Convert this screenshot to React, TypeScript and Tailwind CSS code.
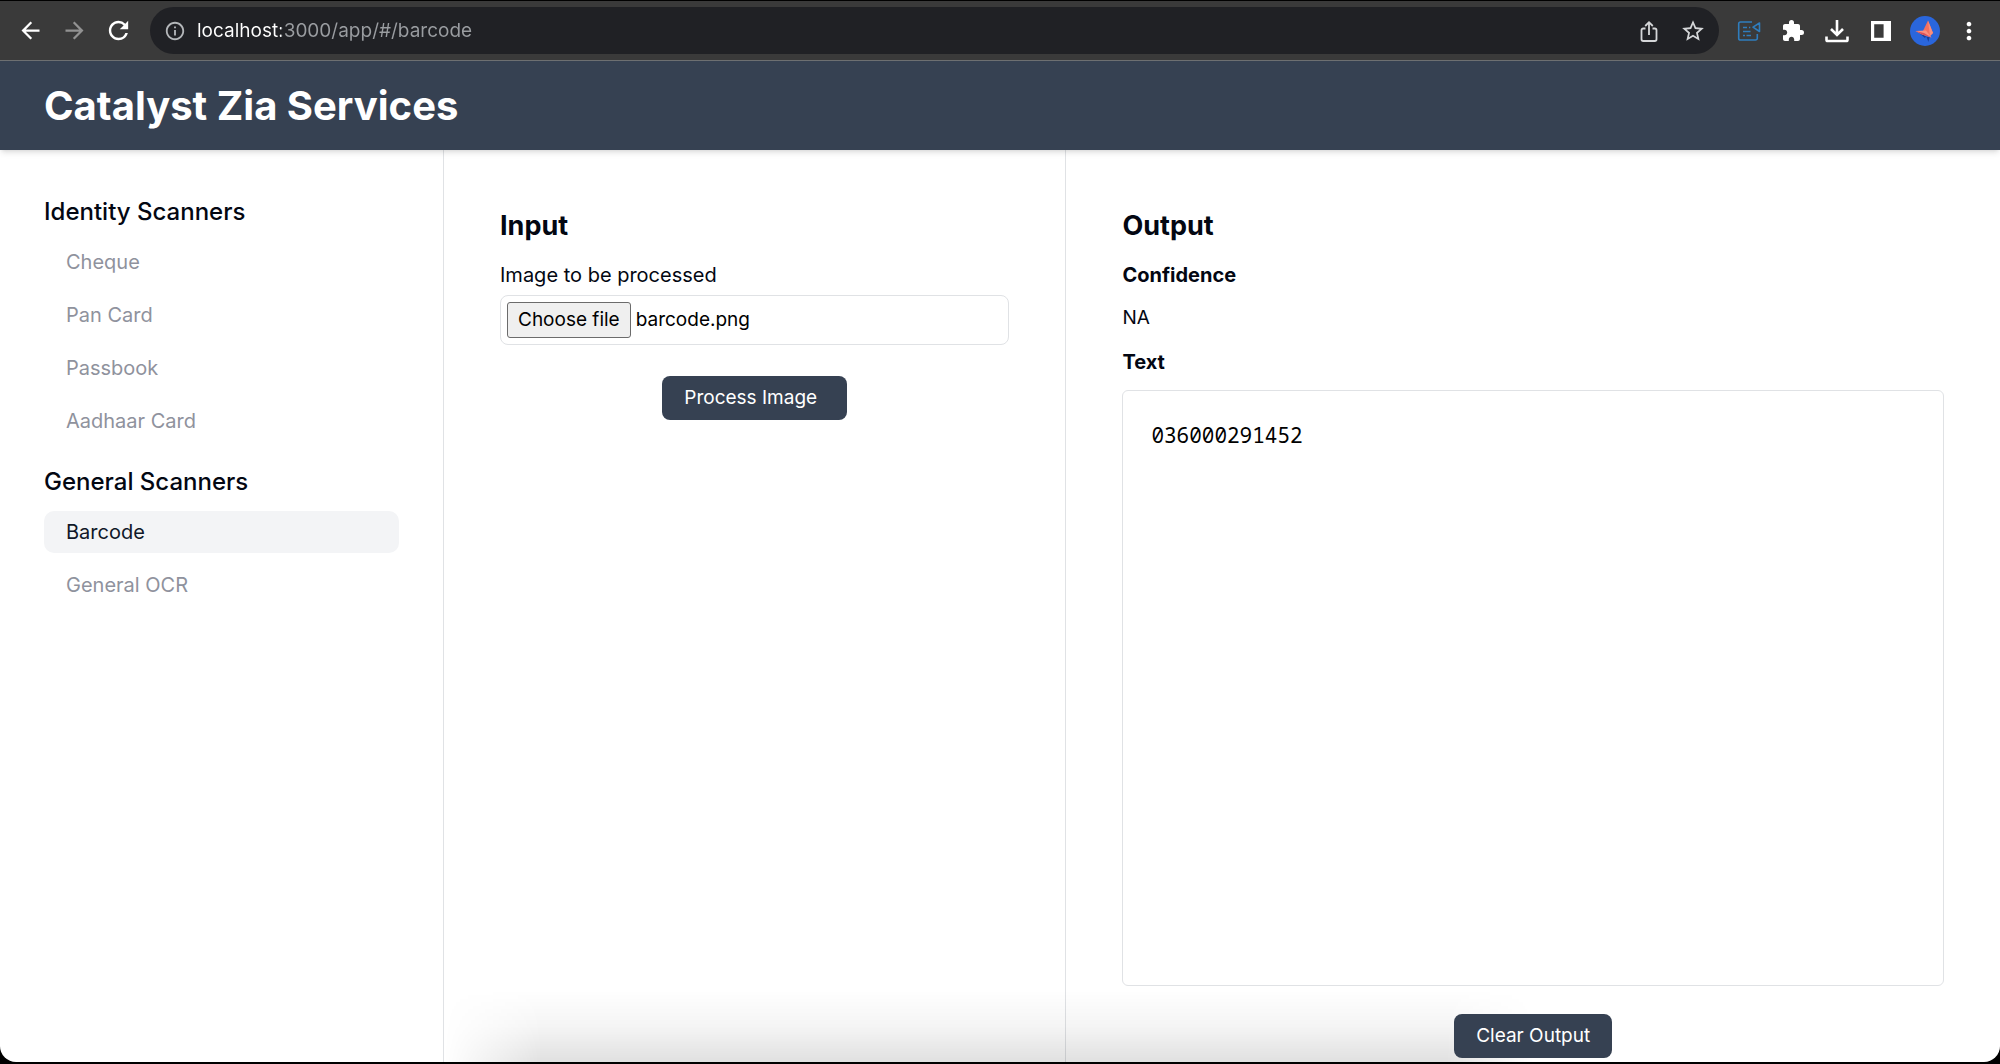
import { useRef, useState } from "react";
import type { ReactNode } from "react";
import { MdArrowBack, MdArrowForward, MdExtension, MdInfoOutline, MdMoreVert, MdRefresh, MdStarBorder } from "react-icons/md";

const groups = [
  {
    title: "Identity Scanners",
    items: ["Cheque", "Pan Card", "Passbook", "Aadhaar Card"],
  },
  { title: "General Scanners", items: ["Barcode", "General OCR"] },
];

function IconButton({ label, className = "", children }: { label: string; className?: string; children: ReactNode }) {
  return (
    <button type="button" aria-label={label} className={`flex size-8 items-center justify-center ${className}`}>
      {children}
    </button>
  );
}

function ShareIcon() {
  return (
    <svg viewBox="0 0 24 24" className="size-6" fill="none" stroke="currentColor" strokeWidth="1.8">
      <path d="M8.5 9.5H6.2A1.7 1.7 0 0 0 4.500 11.200V20.300A1.700 1.700 0 0 0 6.200 22H17.800A1.700 1.700 0 0 0 19.500 20.300V11.200A1.700 1.700 0 0 0 17.800 9.500H15.500" />
      <path d="M12 16V3.500M8.200 7 12 3.200 15.800 7" />
    </svg>
  );
}

function ReaderIcon() {
  return (
    <svg viewBox="0 0 24 22" className="h-[22px] w-6" fill="none" stroke="currentColor" strokeWidth="1.6">
      <path d="M15 2H3.500A1.800 1.800 0 0 0 1.700 3.800V18.200A1.800 1.800 0 0 0 3.500 20H18.500A1.800 1.800 0 0 0 20.300 18.200V14" />
      <path d="M22.500 3V11.500L16 7.200Z" strokeLinejoin="round" />
      <path d="M6 7.500H10M12 7.500H13.300M6 11.500H13.500M6 15.500H8M9.500 15.500H14" />
    </svg>
  );
}

function DownloadIcon() {
  return (
    <svg viewBox="0 0 24 24" className="size-6" fill="none" stroke="currentColor" strokeWidth="2.6">
      <path d="M12 1V15.500M6 10 12 16 18 10" />
      <path d="M1.500 17.500V20.700A1.300 1.300 0 0 0 2.800 22H21.200A1.300 1.300 0 0 0 22.500 20.700V17.500" />
    </svg>
  );
}

function SidePanelIcon() {
  return (
    <svg viewBox="0 0 20 20" className="size-5" fill="currentColor">
      <path fillRule="evenodd" d="M0 0H20V20H0ZM3.200 3.200V16.800H12.600V3.200Z" />
    </svg>
  );
}

function Avatar() {
  return (
    <svg viewBox="0 0 30 30" className="size-[30px]">
      <circle cx="15" cy="15" r="15" fill="#2a66dc" />
      <path d="M9 17 15 22 16 20Z" fill="#1b3f96" />
      <path d="M16.500 21 18.500 26 19.500 21Z" fill="#1b3f96" />
      <path d="M18 4.500 12.500 16 20 20 23 17Z" fill="#f4715f" />
      <path d="M18 4.500 20 20 23 17Z" fill="#fb8f7c" />
      <path d="M5.500 15 16 14.500 21.500 21.500 12 18.500Z" fill="#fa9080" />
      <path d="M5.500 15 12 18.500 21.500 21.500 14 17Z" fill="#d9525a" />
    </svg>
  );
}

function BrowserBar() {
  return (
    <div className="flex h-[61px] items-center border-t border-b border-t-black border-b-[#6d6f71] bg-[#3a3a3a] pr-[15px] pl-[14px] text-white">
      <div className="flex items-center gap-3">
        <IconButton label="Back"><MdArrowBack className="size-[27px]" /></IconButton>
        <IconButton label="Forward" className="text-[#929292]"><MdArrowForward className="size-[27px]" /></IconButton>
        <IconButton label="Reload"><MdRefresh className="size-[29px]" /></IconButton>
      </div>
      <div className="ml-4 flex h-[47px] flex-1 items-center rounded-full bg-[#202125] pr-[10px] pl-[14px]">
        <MdInfoOutline className="size-[22px] text-[#b4b7ba]" />
        <input
          type="text"
          aria-label="Address"
          defaultValue="localhost:3000/app/#/barcode"
          className="ml-[11px] flex-1 bg-[linear-gradient(90deg,#ffffff_84px,#9a9da1_84px)] bg-clip-text text-[19px] leading-7 text-transparent outline-none"
        />
        <div className="flex items-center gap-3 text-[#d5d7d9]">
          <IconButton label="Share"><ShareIcon /></IconButton>
          <IconButton label="Bookmark"><MdStarBorder className="size-[26px]" /></IconButton>
        </div>
      </div>
      <div className="ml-[14px] flex items-center gap-3">
        <IconButton label="Reader" className="text-[#2f7dbd]"><ReaderIcon /></IconButton>
        <IconButton label="Extensions"><MdExtension className="size-6" /></IconButton>
        <IconButton label="Downloads"><DownloadIcon /></IconButton>
        <IconButton label="Side panel"><SidePanelIcon /></IconButton>
        <IconButton label="Profile"><Avatar /></IconButton>
        <IconButton label="Menu"><MdMoreVert className="size-7" /></IconButton>
      </div>
    </div>
  );
}

function Sidebar({ active, onSelect }: { active: string; onSelect: (item: string) => void }) {
  return (
    <nav className="border-r border-[#e0e2e5] px-11 pt-[46px]">
      {groups.map((group) => (
        <section key={group.title} className="mb-6">
          <h2 className="mb-[13px] text-2xl leading-8 font-medium">{group.title}</h2>
          <ul className="flex flex-col gap-[11px]">
            {group.items.map((item) => (
              <li key={item}>
                <a
                  href="#"
                  aria-current={item === active ? "page" : undefined}
                  onClick={(e) => {
                    e.preventDefault();
                    onSelect(item);
                  }}
                  className={
                    item === active
                      ? "block rounded-[10px] bg-gray-100 px-[22px] py-[7px] text-xl text-gray-900"
                      : "block rounded-[10px] px-[22px] py-[7px] text-xl text-[#8f929d]"
                  }
                >
                  {item}
                </a>
              </li>
            ))}
          </ul>
        </section>
      ))}
    </nav>
  );
}

function InputPanel() {
  const fileInput = useRef<HTMLInputElement>(null);
  const [fileName, setFileName] = useState("barcode.png");
  return (
    <section className="flex flex-col border-r border-[#e0e2e5] px-14 pt-14">
      <h2 className="text-[27px] leading-10 font-bold">Input</h2>
      <label htmlFor="image" className="mt-[13px] text-xl leading-8">Image to be processed</label>
      <div className="mt-1 flex items-center rounded-lg border border-[#e0e2e5] p-[6px] text-[19px] leading-7">
        <button type="button" onClick={() => fileInput.current?.click()} className="rounded-[3px] border border-[#6b6b6b] bg-[#efefef] px-[10px] py-[3px] text-black">
          Choose file
        </button>
        <span className="ml-[5px] text-black">{fileName}</span>
        <input ref={fileInput} id="image" type="file" onChange={(e) => setFileName(e.target.files?.[0]?.name ?? "")} className="sr-only" />
      </div>
      <button type="button" className="mt-[31px] self-center rounded-lg bg-[#364152] py-2 pr-[30px] pl-[22px] text-[19px] leading-7 text-white">
        Process Image
      </button>
    </section>
  );
}

function OutputPanel() {
  const [text, setText] = useState("036000291452");
  return (
    <section className="flex flex-col px-14 pt-14 pb-1">
      <h2 className="text-[27px] leading-10 font-bold">Output</h2>
      <h3 className="mt-[13px] text-xl leading-8 font-bold">Confidence</h3>
      <p className="mt-[11px] text-[19px] leading-8">NA</p>
      <h3 className="mt-3 text-xl leading-8 font-bold">Text</h3>
      <pre className="mt-3 flex-1 rounded-md border border-[#e0e2e5] px-7 py-7 font-['Noto_Sans_Mono','DejaVu_Sans_Mono',monospace] text-[21px] leading-8 text-black">{text}</pre>
      <button type="button" onClick={() => setText("")} className="z-10 mt-7 self-center rounded-lg bg-[#364152] px-[22px] py-2 text-[19px] leading-7 text-white">
        Clear Output
      </button>
    </section>
  );
}

export default function App() {
  const [active, setActive] = useState("Barcode");
  return (
    <div className="flex min-h-screen flex-col border-b-2 border-black bg-black font-['Inter',sans-serif] text-gray-950">
      <BrowserBar />
      <div className="flex flex-1 flex-col overflow-hidden rounded-b-[16px] bg-white">
        <header className="z-10 bg-[#364152] px-11 py-5 shadow-md">
          <h1 className="text-[40px] leading-[49px] font-bold text-white">Catalyst Zia Services</h1>
        </header>
        <main className="relative grid flex-1 grid-cols-[444px_2fr_3fr]">
          <Sidebar active={active} onSelect={setActive} />
          <InputPanel />
          <OutputPanel />
          <div aria-hidden="true" className="pointer-events-none absolute bottom-0 left-[444px] h-18 w-[1090px] bg-linear-to-t from-black/12 via-black/4 to-transparent mask-[linear-gradient(90deg,transparent,black_9%,black_92%,transparent)]" />
        </main>
      </div>
    </div>
  );
}
